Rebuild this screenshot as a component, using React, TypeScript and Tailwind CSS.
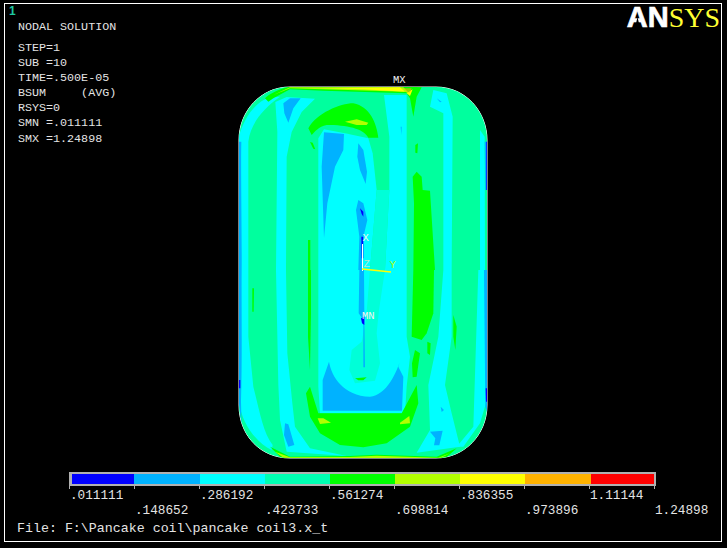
const B = "#00B2FF", C = "#00FFFF", S = "#00FF9E", P = "#00FFD8", G = "#00FF00", L = "#B2FF00", Y = "#FFFF00", O = "#FFB200", D = "#0000FF";

const legend = ["#0000FF", "#00B2FF", "#00FFFF", "#00FFB2", "#00FF00", "#B2FF00", "#FFFF00", "#FFB200", "#FF0000"];
const widths = [62, 66, 65, 65, 65, 65, 65, 66, 63];
const labels = [".011111", ".148652", ".286192", ".423733", ".561274", ".698814", ".836355", ".973896", "1.11144", "1.24898"];
const outline = "M290 87H436C466 87 487 112 487 140V405C487 435 464 458 436 458H290C260 458 239 435 239 405V140C239 112 260 87 290 87Z";

function Plot() {
  return (
    <svg className="absolute left-0 top-0" width={727} height={548} viewBox="0 0 727 548">
      <defs>
        <clipPath id="shape">
          <path d={outline} />
        </clipPath>
      </defs>
      <path d={outline} fill="#fff" stroke="#fff" strokeWidth={1} />
      <g clipPath="url(#shape)">
        <rect x={239} y={87} width={248} height={371} fill={S} />
        {/* top half, in 3x crop coordinates */}
        <g transform="translate(230 70) scale(0.33333)">
          <path d="M27 600V200C40 150 70 100 118 82L150 80C100 115 62 160 55 215V600Z" fill={C} />
          <path d="M27 600V215H34C32 300 36 500 35 600Z" fill={B} />
          <path d="M138 600L142 186L136 96L170 81L255 86L215 126L185 186L170 260L168 600Z" fill={C} />
          <path d="M160 100L180 85L212 85L190 115L175 158L163 130Z" fill={B} />
          <path d="M240 216L248 218L256 238L250 236Z" fill={G} />
          <path d="M265 600L265 205L282 178L345 190L415 205L428 250L440 360L420 600Z" fill={C} />
          <path d="M462 75L530 75L530 600L465 600L478 360L478 200Z" fill={C} />
          <path d="M440 360L420 600H465L478 360Z" fill={P} />
          <path d="M235 175C260 130 330 100 370 100C420 110 440 160 445 203L415 203C400 175 350 165 290 165C265 170 255 185 245 195Z" fill={G} />
          <path d="M345 155L380 148L415 158L410 165L380 165Z" fill={L} />
          <path d="M282 187L342 192L340 240L315 290L292 400L282 505L275 290Z" fill={B} />
          <path d="M385 220L400 240L411 305L407 342L390 300L382 260Z" fill={B} />
          <path d="M385 390L400 400L412 450L398 510L398 600H385L388 500L378 420Z" fill={B} />
          <path d="M390 415L400 425L400 440L395 432ZM394 500H400V565H395Z" fill={D} />
          <path d="M234 510L241 510L241 600H234Z" fill={G} />
          <path d="M610 60L650 70L668 140L665 600L640 600L640 130L600 110Z" fill={C} />
          <path d="M750 180L764 200L765 600H750Z" fill={C} />
          <path d="M764 215H772V360L766 360Z" fill={B} />
          <path d="M769 215H772V360H769Z" fill={D} />
          <path d="M548 320L560 305L575 320L578 360L600 362L615 600H550L552 400Z" fill={G} />
          <path d="M556 225L564 220L562 250L556 248Z" fill={G} />
          <path d="M512 170L515 170L514 195Z" fill={B} />
          <path d="M620 85L635 95L630 97Z" fill={B} />
          <path d="M105 85C120 70 150 55 180 50H400L540 50L575 52L560 80L550 140L540 85L530 70L280 62L180 58L130 85L115 95Z" fill={G} />
          <path d="M130 75L180 52L520 52L540 72L525 65L280 58L180 55Z" fill={L} />
          <path d="M270 54L510 52L530 70L548 58L540 78L525 65L400 58Z" fill={Y} />
          <path d="M520 55L545 55L540 68L530 65Z" fill={O} opacity={0.6} />
        </g>
        {/* bottom half */}
        <g transform="translate(230 270) scale(0.33333)">
          <path d="M27 0V395C35 460 80 520 125 540L128 525C100 490 90 430 70 350L55 200V0Z" fill={C} />
          <path d="M27 0H35C34 100 37 250 33 395L35 470L27 400Z" fill={B} />
          <path d="M27 330H31V355H27Z" fill={D} />
          <path d="M138 0H168L172 250L187 400L195 470L240 535L350 558L170 545L150 450L145 345Z" fill={C} />
          <path d="M165 460L175 463L193 525L175 530L162 495Z" fill={B} />
          <path d="M67 55H72L71 125H67Z" fill={G} />
          <path d="M234 0H243V130L240 300L234 200Z" fill={G} />
          <path d="M265 0H530V200L540 260L530 350L525 430H270L265 350Z" fill={C} />
          <path d="M420 0H465L447 120L440 190L450 280L435 332L375 340L358 300L365 240L395 215L408 150Z" fill={P} />
          <path d="M375 325L410 322L400 331H385Z" fill={G} />
          <path d="M388 0H402L403 130L405 292L400 292L400 150L386 130Z" fill={B} />
          <path d="M393 145L403 140L403 165L396 160Z" fill={D} />
          <path d="M297 275C305 320 340 378 420 380C470 375 500 310 515 258L505 290L520 320L516 422H278L278 330Z" fill={B} />
          <path d="M228 370L240 350L265 430L515 430L560 345L565 400L540 470L470 520L400 532L330 525L270 490L240 440Z" fill={G} />
          <path d="M263 445L280 445L303 458L270 462Z" fill={L} />
          <path d="M510 458L538 438L540 460L510 463Z" fill={L} />
          <path d="M550 0H612L610 130L590 190L575 210L545 200Z" fill={G} />
          <path d="M592 215L602 220L600 255L592 250ZM555 240L570 250L560 320L548 322L546 280Z" fill={G} />
          <path d="M640 0H665L665 200L645 345L665 430L690 530L560 548L600 480L595 345L625 200Z" fill={C} />
          <path d="M670 135L680 170L676 240L670 200Z" fill={G} />
          <path d="M632 410L642 420L635 426ZM600 485L638 482L628 526L612 526L616 505Z" fill={B} />
          <path d="M745 0H765L768 400L750 460L700 530L680 530L730 470Z" fill={C} />
          <path d="M762 0H772V430L766 410Z" fill={B} />
          <path d="M767 355H772V395H768Z" fill={D} />
          <path d="M120 530L180 560L360 558L440 554L620 560L680 535L640 570H160Z" fill={G} />
          <path d="M135 545L180 562L360 561L440 557L625 563L660 550L620 570H170Z" fill={L} />
        </g>
      </g>
      {/* axis triad */}
      <path d="M362.5 244V271" stroke="#fff" strokeWidth={1} fill="none" />
      <path d="M362 269L391 272" stroke={Y} strokeWidth={1.6} fill="none" />
      <g fontFamily="'Liberation Mono', monospace" fontSize={10.5}>
        <text x={393} y={83} fill="#f2f2f2">MX</text>
        <text x={362} y={319} fill="#f2f2f2">MN</text>
        <text x={362.5} y={241} fill="#f2f2f2">X</text>
        <text x={389.5} y={268} fill={L}>Y</text>
        <text x={363.5} y={267} fill="#b5e8cf">Z</text>
      </g>
    </svg>
  );
}

export default function App() {
  return (
    <div className="relative w-[727px] h-[548px] bg-black overflow-hidden font-['Liberation_Mono',monospace]">
      <Plot />
      <div className="absolute left-[4px] top-[3px] w-[718px] h-[539px] border border-white flex flex-col text-[#e4e4e4]">
        <div className="flex justify-between">
          <div>
            <div className="pl-[4px] pt-[1px] h-[12px] text-[12px] leading-[12px] font-bold text-[#1fc8a0] font-['Liberation_Sans',sans-serif]">1</div>
            <div className="pl-[13px] pt-[4px] text-[11.7px] leading-[15px]">NODAL SOLUTION</div>
            <div className="pl-[13px] pt-[6px] text-[11.7px] leading-[15.1px]">
              <div>STEP=1</div>
              <div>SUB =10</div>
              <div>TIME=.500E-05</div>
              <div className="whitespace-pre">BSUM     (AVG)</div>
              <div>RSYS=0</div>
              <div>SMN =.011111</div>
              <div>SMX =1.24898</div>
            </div>
          </div>
          <div className="relative flex items-baseline h-[26px] mr-[1px] mt-[1px] leading-[24px] text-[29px]">
            <span className="font-bold text-white font-['Liberation_Sans',sans-serif] [-webkit-text-stroke:0.7px_white]">AN</span>
            <span className="text-[28px] text-[#ffff33] font-['Liberation_Serif',serif]">SYS</span>
            <svg className="absolute left-0 top-[2px]" width={22} height={24} viewBox="0 0 22 24">
              <path d="M10.5 10L7.5 23H13.5Z" fill="#000" />
            </svg>
          </div>
        </div>
        <div className="mt-auto pl-[64px]">
          <div className="flex w-[587px] h-[14px] bg-[#b0b0b0] pl-[3px] pr-[2px] pt-[2px] pb-[2px]">
            {legend.map((c, i) => (
              <div key={c} className="h-full" style={{ width: widths[i], backgroundColor: c }} />
            ))}
          </div>
          <div className="grid grid-cols-[repeat(10,65px)] text-[12.7px] leading-[15px] whitespace-nowrap">
            {labels.map((t, i) => (
              <div key={t} className={i % 2 === 0 ? "relative pt-[2px] pl-[1px] h-[35px]" : "relative pt-[17px] pl-[1px] h-[35px]"}>
                <div className="absolute left-0 top-0 h-[3px] w-px bg-[#b0b0b0]" />
                {t}
              </div>
            ))}
          </div>
        </div>
        <div className="pl-[12px] pb-[5px] text-[13.3px] leading-[15px] whitespace-pre">File: F:\Pancake coil\pancake coil3.x_t</div>
      </div>
    </div>
  );
}
